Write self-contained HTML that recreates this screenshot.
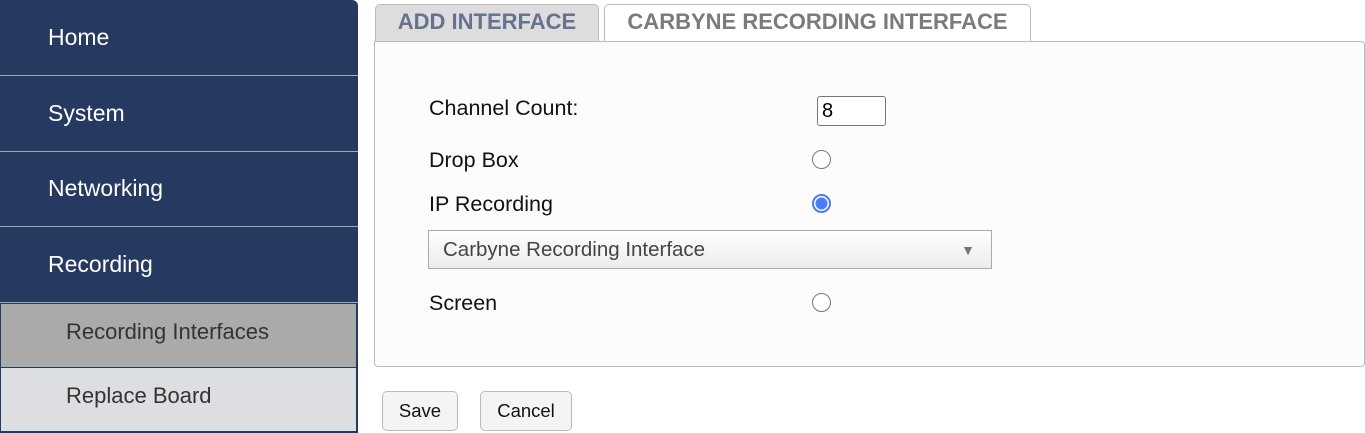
<!DOCTYPE html>
<html><head><style>
*{box-sizing:border-box;margin:0;padding:0}
body{width:1365px;height:433px;background:#fff;font-family:"Liberation Sans",Arial,sans-serif;position:relative;overflow:hidden}
.side{position:absolute;left:0;top:0;width:358px;height:433px}
.nav{position:absolute;left:0;width:358px;background:#263961;color:#fff;font-size:23px;padding-left:48px;border-bottom:1px solid #a0a8b8}
.sub{position:absolute;left:0;width:358px;font-size:22px;color:#333;padding-left:65px;border-left:1px solid #263961;border-right:2px solid #263961}
.tab{position:absolute;top:4px;height:37px;border:1px solid #bbb;border-bottom:none;border-radius:5px 5px 0 0;font-weight:bold;font-size:22px;text-align:center;line-height:34px}
.panel{position:absolute;left:374px;top:41px;width:991px;height:326px;background:#fcfcfc;border:1px solid #bbb;border-radius:0 4px 4px 4px}
.lbl{position:absolute;left:429px;font-size:21.5px;color:#111}
.radio{position:absolute;left:812px;width:19px;height:19px;border:1.5px solid #777;border-radius:50%;background:#fff}
.btn{position:absolute;top:391px;height:40px;border:1px solid #bbb;border-radius:5px;background:#f4f4f4;font-size:18.5px;text-align:center;line-height:38px;color:#111}
</style></head><body>
<div class="side">
<div class="nav" style="top:0;height:76px;line-height:74px;border-radius:0 6px 0 0">Home</div>
<div class="nav" style="top:76px;height:76px;line-height:74px">System</div>
<div class="nav" style="top:152px;height:75px;line-height:72px">Networking</div>
<div class="nav" style="top:227px;height:76px;line-height:74px;border-bottom:1px solid #a0a8b8">Recording</div>
<div class="sub" style="top:303px;height:65px;line-height:56px;background:#aaa;border-top:1px solid #263961;border-bottom:1px solid #263961">Recording Interfaces</div>
<div class="sub" style="top:368px;height:65px;line-height:56px;background:#dddee2;border-bottom:2px solid #263961">Replace Board</div>
</div>
<div class="tab" style="left:375px;width:224px;background:#dddddd;color:#66738f">ADD INTERFACE</div>
<div class="tab" style="left:604px;width:427px;background:#fff;color:#7b7b7b;height:38px">CARBYNE RECORDING INTERFACE</div>
<div class="panel"></div>
<div class="lbl" style="top:96px">Channel Count:</div>
<div style="position:absolute;left:817px;top:96px;width:69px;height:30px;border:1px solid #777;border-radius:3px;background:#fff;font-size:20px;line-height:28px;padding-left:4px;color:#000">8</div>
<div class="lbl" style="top:148px">Drop Box</div>
<div class="radio" style="top:150px"></div>
<div class="lbl" style="top:192px">IP Recording</div>
<div class="radio" style="top:194px;border:2px solid #4a7df0;background:radial-gradient(circle,#4a7df0 0 5.5px,#fff 6.5px)"></div>
<div style="position:absolute;left:428px;top:230px;width:564px;height:39px;border:1px solid #aaa;background:linear-gradient(#fff,#f6f6f6 45%,#ececec);font-size:20.5px;color:#444;line-height:37px;padding-left:14px">Carbyne Recording Interface<span style="position:absolute;right:16px;top:1px;font-size:14px;color:#777">▼</span></div>
<div class="lbl" style="top:291px">Screen</div>
<div class="radio" style="top:293px"></div>
<div class="btn" style="left:382px;width:76px">Save</div>
<div class="btn" style="left:480px;width:92px">Cancel</div>
</body></html>
